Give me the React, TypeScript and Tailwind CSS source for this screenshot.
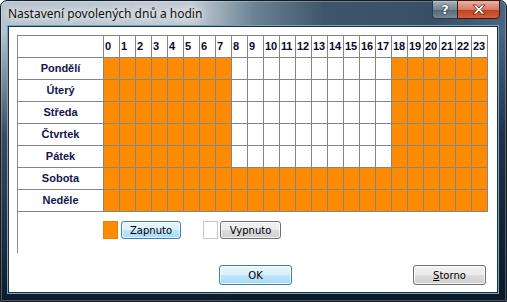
import React from 'react';

const DAYS = ['Pondělí', 'Úterý', 'Středa', 'Čtvrtek', 'Pátek', 'Sobota', 'Neděle'];
const HOURS = Array.from({ length: 24 }, (_, i) => i);

// víkend celý, ve všední dny mimo 8–17
const isOn = (day: number, hour: number) => day >= 5 || hour < 8 || hour >= 18;

const btnBase =
  "flex items-center justify-center rounded-[3px] text-[10px] text-black font-['DejaVu_Sans',sans-serif] shadow-[inset_0_0_0_1px_rgba(255,255,255,0.75)]";
const btnNormal =
  'border border-[#707070] bg-[linear-gradient(to_bottom,#f2f2f2_0%,#ebebeb_50%,#dddddd_51%,#cfcfcf_100%)]';
const btnDefault =
  'border border-[#3c7fb1] bg-[linear-gradient(to_bottom,#eaf6fd_0%,#d9f0fc_50%,#bee6fd_51%,#a7d9f5_100%)]';

const App: React.FC = () => {
  return (
    <div className="w-[507px] h-[302px] overflow-hidden bg-white">
      <div className="w-[507px] h-[302px] flex flex-col pl-[7px] pr-[8px] pb-[8px] rounded-t-[7px] border border-[#101c28] bg-[linear-gradient(to_bottom,rgba(0,0,0,0)_0%,rgba(0,0,0,0)_10%,rgba(18,34,52,0.75)_45%,rgba(10,22,36,0.97)_100%),linear-gradient(to_right,#b7c2cc_0%,#c2cbd3_38%,#6d8394_50%,#3f5569_64%,#394f63_86%,#4b6680_100%)] shadow-[inset_0_0_0_1px_rgba(255,255,255,0.25)]">
        {/* titulek okna */}
        <div className="h-[26px] flex items-start justify-between -mt-px">
          <span className="self-center mt-[1px] text-[12px] text-[#111] font-['Noto_Sans',sans-serif] [text-shadow:0_0_6px_#fff,0_0_10px_#fff]">
            Nastavení povolených dnů a hodin
          </span>
          <div className="flex -mr-[2px] mt-0">
            <div className="w-[25px] h-[19px] flex items-center justify-center rounded-bl-[4px] border border-[#2a3a4a] border-r-0 bg-[linear-gradient(to_bottom,rgba(255,255,255,0.55)_0%,rgba(255,255,255,0.3)_50%,rgba(255,255,255,0.12)_51%,rgba(255,255,255,0.3)_100%)] text-white font-bold text-[13px] font-['DejaVu_Sans',sans-serif] [text-shadow:0_0_2px_#223,0_0_1px_#000]">
              ?
            </div>
            <div className="w-[43px] h-[19px] flex items-center justify-center rounded-br-[4px] border border-[#3a1a14] bg-[linear-gradient(to_bottom,#eab2a2_0%,#d77a63_50%,#c2401f_51%,#d4603a_100%)]">
              <svg width="14" height="11" viewBox="0 0 14 11">
                <path
                  d="M1 1 H4.5 L7 4 L9.5 1 H13 L9 5.5 L13 10 H9.5 L7 7 L4.5 10 H1 L5 5.5 Z"
                  fill="#fff"
                  stroke="#5a1a10"
                  strokeWidth="0.8"
                  strokeLinejoin="round"
                />
              </svg>
            </div>
          </div>
        </div>

        {/* klientská oblast */}
        <div className="flex-1 flex flex-col bg-white border border-[#1c3044] shadow-[0_0_0_1px_#6fa6c6]">
          <div className="pl-[8px] pt-[8px]">
            <div className="h-[218px] border-l border-[#8a8a8a] flex flex-col">
              <div className="grid grid-cols-[86px_repeat(24,16px)] border-t border-[#858585] w-[470px] font-['Liberation_Sans',Arial,sans-serif] font-bold text-[11px]">
                <div className="h-[22px] border-r border-b border-[#858585]" />
                {HOURS.map((h) => (
                  <div
                    key={h}
                    className="h-[22px] border-r border-b border-[#858585] flex items-center pl-[1px] text-[#0a0a28] tracking-[-0.2px]"
                  >
                    {h}
                  </div>
                ))}
                {DAYS.map((day, d) => (
                  <React.Fragment key={day}>
                    <div className="h-[22px] border-r border-b border-[#858585] flex items-center justify-center text-[#14144a]">
                      {day}
                    </div>
                    {HOURS.map((h) => (
                      <div
                        key={h}
                        className={`h-[22px] border-r border-b border-[#858585] ${isOn(d, h) ? 'bg-[#ff8c00]' : 'bg-white'}`}
                      />
                    ))}
                  </React.Fragment>
                ))}
              </div>

              {/* legenda */}
              <div className="flex items-center pl-[85px] mt-[9px] h-[18px]">
                <div className="w-[15px] h-[18px] bg-[#ff8c00] border border-[#e88000]" />
                <button className={`${btnBase} ${btnDefault} ml-[3px] w-[60px] h-[18px]`}>Zapnuto</button>
                <div className="ml-[22px] w-[15px] h-[18px] bg-white border border-[#c8c8c8]" />
                <button className={`${btnBase} ${btnNormal} ml-[2px] w-[61px] h-[18px]`}>Vypnuto</button>
              </div>
            </div>
          </div>

          {/* tlačítka dialogu */}
          <div className="flex items-center mt-[12px] h-[20px]">
            <button className={`${btnBase} ${btnDefault} ml-[210px] w-[73px] h-[20px]`}>OK</button>
            <button className={`${btnBase} ${btnNormal} ml-auto mr-[11px] w-[73px] h-[20px]`}>
              <span className="underline">S</span>torno
            </button>
          </div>
        </div>
      </div>
    </div>
  );
};

export default App;
